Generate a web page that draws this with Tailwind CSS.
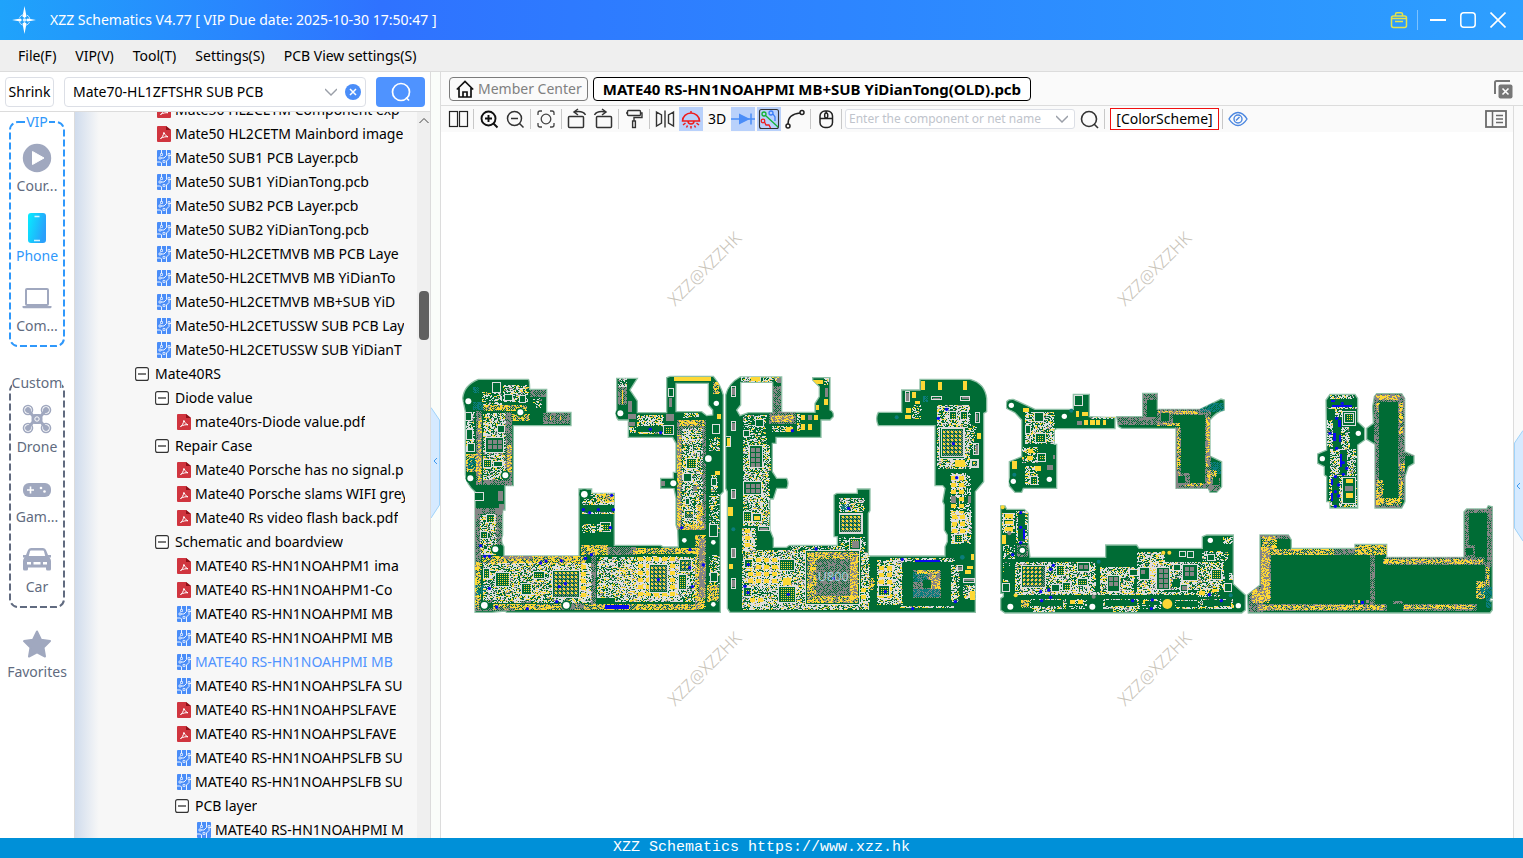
<!DOCTYPE html>
<html lang="en">
<head>
  <meta charset="UTF-8" />
  <meta name="viewport" content="width=device-width, initial-scale=1" />
  <title>XZZ Schematics</title>
  <script src="https://cdn.jsdelivr.net/npm/@tailwindcss/browser@4"></script>
</head>
<body class="h-screen flex flex-col overflow-hidden bg-white text-black text-[14px] leading-5 font-['Noto_Sans','Open_Sans',sans-serif]">

  <!-- Icon sprites -->
  <svg class="hidden">
    <symbol id="i-pdf" viewBox="0 0 14 16">
      <path d="M1 0h8l5 4v11a1 1 0 0 1-1 1H1a1 1 0 0 1-1-1V1a1 1 0 0 1 1-1z" fill="#d0353f" />
      <path d="M9 0l5 4H9z" fill="#8f1119" />
      <path d="M3.500 12.500c1.500-.7 3-3.200 3.300-6 .2-1 .8 3.500 4.200 4.300-2.500-.3-5 .2-7.500 1.700z" fill="none" stroke="#fff" stroke-width="1" />
    </symbol>
    <symbol id="i-pcb" viewBox="0 0 14 16">
      <rect width="14" height="16" rx="1" fill="#4a8df8" />
      <path d="M4.500 0v4M9.500 0v5.500L7 8H4M14 5.500h-2v3L9.500 11v5M0 12h3.500l1 1v3" fill="none" stroke="#fff" stroke-width=".9" />
      <path d="M3.500 3.500h2v2h-2zM2 7h2v2H2zM11 3.500h2v2h-2zM6 10.500h2v2H6z" fill="#4a8df8" stroke="#fff" stroke-width=".7" />
    </symbol>
    <symbol id="i-minus" viewBox="0 0 14 14">
      <rect x=".6" y=".6" width="12.800" height="12.800" rx="2" fill="#fff" stroke="#333" stroke-width="1.100" />
      <path d="M3 7h8" stroke="#222" stroke-width="1.200" />
    </symbol>
  </svg>

  <!-- Title bar -->
  <header class="h-10 shrink-0 flex items-center pl-3 pr-2.5 text-white bg-linear-to-r from-[#1fa3fb] via-[#2f72ff] via-25% to-[#2d9fff]">
    <svg class="w-6 h-7 shrink-0" viewBox="0 0 24 28">
      <path d="M12.500 0l2 10.500-2 1.500-2-1.500zM12.500 28l2-10.500-2-1.500-2 1.500zM0 14l8.500-1.500 1.500 1.500-1.500 1.500zM24 14l-8.500-1.500L14 14l1.500 1.500z" fill="#fff" />
      <circle cx="12.500" cy="14" r="5.500" fill="none" stroke="#c9e6ff" stroke-dasharray="5 3.600" stroke-dashoffset="-2" />
      <circle cx="12.500" cy="14" r="1.800" fill="#d9efff" />
    </svg>
    <h1 class="ml-3.5">XZZ Schematics V4.77 [ VIP Due date: 2025-10-30 17:50:47 ]</h1>
    <div class="ml-auto flex items-center">
      <button aria-label="Toolbox" class="w-5 h-5 flex items-center justify-center">
        <svg class="w-[18px] h-[18px]" viewBox="0 0 18 18" fill="none" stroke="#e6e34a" stroke-width="1.500">
          <rect x="1.500" y="5" width="15" height="11.500" rx="2" />
          <path d="M5.500 5V3.200a1.500 1.500 0 0 1 1.500-1.500h4a1.500 1.500 0 0 1 1.500 1.500V5M1.500 7.500h15M5 10.500h8" />
        </svg>
      </button>
      <span class="w-px h-5 bg-[#7cc2ff] ml-2 mr-[5px]"></span>
      <button aria-label="Minimize" class="w-[30px] h-6 flex items-center justify-center"><svg class="w-4 h-4" viewBox="0 0 16 16"><path d="M0 8h16" stroke="#fff" stroke-width="2" /></svg></button>
      <button aria-label="Maximize" class="w-[30px] h-6 flex items-center justify-center"><svg class="w-4 h-4" viewBox="0 0 16 16"><rect x=".8" y=".8" width="14.400" height="14.400" rx="3" fill="none" stroke="#fff" stroke-width="1.500" /></svg></button>
      <button aria-label="Close" class="w-[30px] h-6 flex items-center justify-center"><svg class="w-4 h-4" viewBox="0 0 16 16"><path d="M.5.500l15 15M15.500.500l-15 15" stroke="#fff" stroke-width="1.600" /></svg></button>
    </div>
  </header>

  <!-- Menu -->
  <nav class="h-8 shrink-0 flex items-center gap-[19px] pl-[18px] bg-[#efefef] border-b border-[#dcdcdc]">
    <button>File(F)</button>
    <button>VIP(V)</button>
    <button>Tool(T)</button>
    <button>Settings(S)</button>
    <button>PCB View settings(S)</button>
  </nav>

  <main class="flex-1 min-h-0 flex">

    <!-- Left side -->
    <aside class="w-[431px] shrink-0 flex flex-col border-r border-[#dcdcdc]">
      <form class="h-10 shrink-0 flex items-center px-[5px] border-b border-[#dcdcdc]">
        <button type="button" class="w-[49px] h-[30px] border border-[#dcdfe6] rounded">Shrink</button>
        <div class="ml-2.5 w-[302px] h-[30px] flex items-center border border-[#dcdfe6] rounded px-2">
          <input aria-label="Search files" value="Mate70-HL1ZFTSHR SUB PCB" class="flex-1 min-w-0 outline-none" />
          <svg class="w-3 h-3" viewBox="0 0 12 12"><path d="M0 3l6 6 6-6" fill="none" stroke="#9a9fa8" stroke-width="1.400" /></svg>
          <button type="button" aria-label="Clear" class="ml-2 -mr-1"><svg class="w-4 h-4" viewBox="0 0 16 16"><circle cx="8" cy="8" r="8" fill="#4a8df8" /><path d="M5 5l6 6M11 5l-6 6" stroke="#fff" stroke-width="1.500" /></svg></button>
        </div>
        <button aria-label="Search" class="ml-auto w-[49px] h-[30px] rounded bg-[#4f93ff] flex items-center justify-center">
          <svg class="w-5 h-5" viewBox="0 0 20 20" fill="none" stroke="#fff" stroke-width="1.700"><circle cx="10" cy="10" r="8.500" /><path d="M15 15.500l3 3" /></svg>
        </button>
      </form>

      <div class="flex-1 min-h-0 flex">
        <!-- Categories -->
        <nav class="w-[74px] shrink-0 px-[9px] text-[#616b80]">
          <fieldset class="h-[235px] relative pt-[3px]">
            <svg class="absolute left-0 top-[-11px] w-14 h-[226px] -z-10" viewBox="0 0 56 226"><rect x="1" y="1" width="54" height="224" rx="8" fill="none" stroke="#2f98fb" stroke-width="2" stroke-dasharray="7 3" /></svg>
            <legend class="mx-auto bg-white px-px text-[#2f98fb]">VIP</legend>
            <button class="w-full h-[70px] pt-2 flex flex-col items-center gap-[3px]">
              <svg class="w-[30px] h-[30px]" viewBox="0 0 30 30"><circle cx="15" cy="15" r="14.200" fill="#a0a8bf" /><path d="M10.500 8.500v13L22 15z" fill="#fff" stroke="#fff" stroke-linejoin="round" /></svg>
              <span>Cour...</span>
            </button>
            <button class="w-full h-[70px] pt-2 flex flex-col items-center gap-[3px] text-[#2f98fb]">
              <svg class="w-[30px] h-[30px]" viewBox="0 0 30 30">
                <defs><linearGradient id="phone" x1="0" y1="0" x2="1" y2=".4"><stop offset="0" stop-color="#06eeff" /><stop offset="1" stop-color="#2aa0fb" /></linearGradient></defs>
                <rect x="6" width="18" height="30" rx="3" fill="url(#phone)" /><path d="M12.500 3.500h5M12 27.500h6" stroke="#d5f6ff" stroke-width="1.300" />
              </svg>
              <span>Phone</span>
            </button>
            <button class="w-full h-[70px] pt-2 flex flex-col items-center gap-[3px]">
              <svg class="w-[30px] h-[30px]" viewBox="0 0 30 30"><rect x="4" y="6" width="22" height="16" rx="1" fill="none" stroke="#a0a8bf" stroke-width="2" /><path d="M.5 23h29v1.500l-1 .8h-27l-1-.8z" fill="#a0a8bf" /></svg>
              <span>Com...</span>
            </button>
          </fieldset>

          <fieldset class="mt-[26px] h-[235px] relative pt-[3px]">
            <svg class="absolute left-0 top-[-11px] w-14 h-[226px] -z-10" viewBox="0 0 56 226"><rect x="1" y="1" width="54" height="224" rx="8" fill="none" stroke="#616b80" stroke-width="2" stroke-dasharray="7 3" /></svg>
            <legend class="mx-auto bg-white">Custom</legend>
            <button class="w-full h-[70px] pt-2 flex flex-col items-center gap-[3px]">
              <svg class="w-[30px] h-[30px]" viewBox="0 0 30 30" fill="none" stroke="#a0a8bf">
                <path d="M6 6l5 6h8l5-6M6 24l5-6h8l5 6" stroke-width="3" /><rect x="10" y="10.500" width="10" height="9" rx="3" fill="#a0a8bf" />
                <circle cx="6" cy="6" r="4.500" stroke-width="1.600" /><circle cx="24" cy="6" r="4.500" stroke-width="1.600" /><circle cx="6" cy="24" r="4.500" stroke-width="1.600" /><circle cx="24" cy="24" r="4.500" stroke-width="1.600" />
                <g fill="#a0a8bf"><circle cx="6" cy="6" r="2.500" /><circle cx="24" cy="6" r="2.500" /><circle cx="6" cy="24" r="2.500" /><circle cx="24" cy="24" r="2.500" /></g>
                <circle cx="15" cy="15" r="2.200" stroke="#fff" />
              </svg>
              <span>Drone</span>
            </button>
            <button class="w-full h-[70px] pt-2 flex flex-col items-center gap-[3px]">
              <svg class="w-[30px] h-[30px]" viewBox="0 0 30 30"><rect x="1" y="9" width="28" height="14" rx="6" fill="#a0a8bf" /><path d="M5 16h7M8.500 12.500v7" stroke="#fff" stroke-width="1.600" /><circle cx="19" cy="14" r="1.300" fill="#fff" /><circle cx="22.500" cy="17.500" r="1.300" fill="#fff" /></svg>
              <span>Gam...</span>
            </button>
            <button class="w-full h-[70px] pt-2 flex flex-col items-center gap-[3px]">
              <svg class="w-[30px] h-[30px]" viewBox="0 0 30 30">
                <path fill-rule="evenodd" fill="#a0a8bf" d="M9 4h12q2.500 0 3.200 2.500L26 11h3v2.500h-1.500Q29 15 29 17v8q0 1.500-1.500 1.500h-2q-1.500 0-1.500-1.500v-1.500H6V25q0 1.500-1.500 1.500h-2Q1 26.500 1 25v-8q0-2 1.500-3.500H1V11h3l1.800-4.500Q6.500 4 9 4zM9 6.500Q8.200 6.500 8 7.300L6.800 12h16.400L22 7.300q-.2-.8-1-.8zM5 18v2.500h4V18zM21 18v2.500h4V18zM11.500 18v2.500h7V18z" />
              </svg>
              <span>Car</span>
            </button>
          </fieldset>

          <button class="mt-[13px] w-full h-[75px] pt-2 flex flex-col items-center gap-[3px]">
            <svg class="w-[30px] h-[30px]" viewBox="0 0 30 30"><path d="M15 2.500l4 8.300 9 1.300-6.500 6.400 1.500 9-8-4.200-8 4.200 1.500-9L2 12.100l9-1.300z" fill="#a0a8bf" stroke="#a0a8bf" stroke-width="2" stroke-linejoin="round" /></svg>
            <span>Favorites</span>
          </button>
        </nav>

        <!-- File tree -->
        <div class="flex-1 min-w-0 flex bg-[#f7f7f7] border-l border-[#dcdcdc]">
          <div class="flex-1 min-w-0 overflow-hidden pr-3 bg-linear-to-r from-[#d0dced] to-transparent to-[24px]">
            <ul id="tree" class="-mt-[14px]"></ul>
          </div>
          <div class="w-[13px] shrink-0 flex flex-col items-center bg-[#efefef] pt-1">
            <svg class="w-2.5 h-2.5" viewBox="0 0 10 10"><path d="M.5 7L5 2.500 9.500 7" fill="none" stroke="#444" /></svg>
            <span class="mt-[165px] w-2.5 h-[49px] rounded bg-[#606060]"></span>
          </div>
        </div>
      </div>
    </aside>

    <!-- Collapse handle -->
    <div class="w-2.5 shrink-0 flex items-center pt-4 bg-[#fafdfa] border-r border-[#dcdcdc]">
      <button aria-label="Collapse file list">
        <svg class="w-[9px] h-[112px]" viewBox="0 0 9 112"><path d="M0 .500L8.500 13v85L0 111" fill="#d6eaff" stroke="#9fd3fa" /><path d="M6 51L3 54l3 3" fill="none" stroke="#3f9bf0" /></svg>
      </button>
    </div>

    <!-- Right side -->
    <section class="flex-1 min-w-0 flex flex-col">
      <div class="h-[34px] shrink-0 flex items-center gap-[5px] pl-2 pr-2.5 bg-[#fafafa] border-b border-[#dcdcdc]">
        <button class="h-6 flex items-center gap-1 pl-1.5 pr-[5px] border border-[#7b7b7b] rounded text-[#808080]">
          <svg class="w-[18px] h-[18px]" viewBox="0 0 18 18" fill="none" stroke="#111" stroke-width="1.700"><path d="M.8 9.500L9 1.500l8.200 8M3 8v9h12V8" /><path d="M7 17v-5h4v5" /></svg>
          Member Center
        </button>
        <button class="h-6 px-[9px] border border-black rounded font-bold text-[15px] bg-white">MATE40 RS-HN1NOAHPMI MB+SUB YiDianTong(OLD).pcb</button>
        <button aria-label="Close all tabs" class="ml-auto">
          <svg class="w-5 h-5" viewBox="0 0 20 20"><path d="M2 15V3.500A1.500 1.500 0 0 1 3.500 2H17" fill="none" stroke="#777" stroke-width="2" /><rect x="5.500" y="5.500" width="14" height="14" rx="2" fill="#777" /><path d="M9.500 9.500l6 6M15.500 9.500l-6 6" stroke="#fff" stroke-width="1.600" /></svg>
        </button>
      </div>

      <div class="flex-1 min-h-0 flex">
        <div class="flex-1 min-w-0 flex flex-col">
          <!-- Toolbar -->
          <div class="h-[26px] shrink-0 flex items-center gap-0.5 px-[5px] bg-[#fafafa]">
            <button aria-label="Split view" class="w-6 h-6"><svg viewBox="0 0 24 24" fill="none" stroke="#222" stroke-width="1.200"><rect x="3.500" y="4.500" width="8" height="15" /><rect x="13.500" y="4.500" width="8" height="15" /></svg></button>
            <span class="w-px h-5 mx-px bg-[#c8c8c8]"></span>
            <button aria-label="Zoom in" class="w-6 h-6"><svg viewBox="0 0 24 24" fill="none" stroke="#111" stroke-width="1.900"><circle cx="11.500" cy="11.500" r="7" /><path d="M16.500 16.500l4 4M8 11.500h7M11.500 8v7" /></svg></button>
            <button aria-label="Zoom out" class="w-6 h-6"><svg viewBox="0 0 24 24" fill="none" stroke="#333" stroke-width="1.500"><circle cx="11.500" cy="11.500" r="7" /><path d="M16.500 16.500l4 4M8 11.500h7" /></svg></button>
            <span class="w-px h-5 mx-px bg-[#c8c8c8]"></span>
            <button aria-label="Fit" class="w-6 h-6"><svg viewBox="0 0 24 24" fill="none" stroke="#444" stroke-width="1.300"><circle cx="12" cy="12" r="4.800" /><path d="M4 8V6q0-2 2-2h2M16 4h2q2 0 2 2v2M20 16v2q0 2-2 2h-2M8 20H6q-2 0-2-2v-2" /></svg></button>
            <span class="w-px h-5 mx-px bg-[#c8c8c8]"></span>
            <button aria-label="Rotate left" class="w-6 h-6"><svg viewBox="0 0 24 24" fill="none" stroke="#333" stroke-width="1.500"><rect x="3.500" y="9.500" width="15" height="11" rx="1" /><path d="M20.500 8Q18 3.500 9.500 5M13 2L9 5l4 3" /></svg></button>
            <button aria-label="Rotate right" class="w-6 h-6"><svg viewBox="0 0 24 24" fill="none" stroke="#333" stroke-width="1.500"><rect x="5.500" y="9.500" width="15" height="11" rx="1" /><path d="M3.500 8Q6 3.500 14.500 5M11 2l4 3-4 3" /></svg></button>
            <span class="w-px h-5 mx-px bg-[#c8c8c8]"></span>
            <button aria-label="Paint" class="w-6 h-6"><svg viewBox="0 0 24 24" fill="none" stroke="#333" stroke-width="1.400"><rect x="5.500" y="3.500" width="13" height="5" rx="1" /><path d="M18.500 6H20v4.500h-8V14M5.500 6H4" /><rect x="10.600" y="14" width="2.800" height="6.500" /></svg></button>
            <span class="w-px h-5 mx-px bg-[#c8c8c8]"></span>
            <button aria-label="Mirror" class="w-6 h-6"><svg viewBox="0 0 24 24" fill="none" stroke="#333" stroke-width="1.400"><path d="M3.500 5l5 3v8l-5 3zM20.500 5l-5 3v8l5 3zM12 3.500v17" /></svg></button>
            <button aria-label="Light" class="w-6 h-6 bg-[#b9d1fb]"><svg viewBox="0 0 24 24" fill="none" stroke="#ee1c1c" stroke-width="1.500"><path d="M3.500 14a8.500 8 0 0 1 17 0zM12 4v2M9 14q0 3 3 3t3-3M6.500 16l-2.500 2M8.500 18.500l-1 2M12 19v2.500M15.500 18.500l1 2M17.500 16l2.500 2" /></svg></button>
            <button class="w-6 h-6">3D</button>
            <button aria-label="Diode" class="w-6 h-6 bg-[#b9d1fb]"><svg viewBox="0 0 24 24" stroke="#4a8df8" stroke-width="1.500"><path d="M0 12h24M20 6.500v11" /><path d="M8 6.500v11l11-5.500z" fill="#4a8df8" stroke="none" /></svg></button>
            <button aria-label="Net lines" class="w-6 h-6 bg-[#b9d1fb]"><svg viewBox="0 0 24 24" fill="none" stroke-width="1.300"><rect x="2.500" y="2.500" width="19" height="19" rx="2" stroke="#333" stroke-width="1.100" /><path d="M8.500 8.500L21 20" stroke="#12b332" /><circle cx="7" cy="7" r="2" stroke="#12b332" /><circle cx="14" cy="6" r="2" stroke="#3a7df6" /><path d="M16 7l2 3v4" stroke="#3a7df6" /><circle cx="6" cy="14" r="1.800" stroke="#ee1c1c" /><path d="M7.500 15l1.500 3h3l1.500 3" stroke="#ee1c1c" /></svg></button>
            <button aria-label="Curve" class="w-6 h-6"><svg viewBox="0 0 24 24" fill="none" stroke="#222" stroke-width="1.500"><circle cx="19" cy="5.500" r="2" /><circle cx="5" cy="19" r="2" /><path d="M5 17Q5 7 17 6" /></svg></button>
            <span class="w-px h-5 mx-px bg-[#c8c8c8]"></span>
            <button aria-label="Mouse" class="w-6 h-6"><svg viewBox="0 0 24 24" fill="none" stroke="#222" stroke-width="1.500"><rect x="6" y="4" width="12.500" height="16.500" rx="5" /><path d="M6 11.500h12.500M12.200 4v2" /><rect x="10.700" y="6" width="3" height="5" rx="1.500" /></svg></button>
            <span class="w-px h-5 mx-px bg-[#c8c8c8]"></span>
            <div class="w-[230px] h-5 flex items-center pl-[3px] pr-1.5 border border-[#dcdfe6] rounded-[3px] bg-white">
              <input aria-label="Component or net name" placeholder="Enter the component or net name" class="w-[203px] outline-none text-[12px] placeholder:text-[#c0c4cc]" />
              <svg class="ml-auto w-3 h-3" viewBox="0 0 12 12"><path d="M0 3l6 6 6-6" fill="none" stroke="#9a9fa8" stroke-width="1.500" /></svg>
            </div>
            <button aria-label="Find" class="w-6 h-6"><svg viewBox="0 0 24 24" fill="none" stroke="#333" stroke-width="1.600"><circle cx="12" cy="12" r="7.500" /><path d="M17 17l4 4" /></svg></button>
            <span class="w-px h-5 mx-px bg-[#c8c8c8]"></span>
            <button class="w-[109px] h-[22px] ml-0.5 border border-[#f01010] bg-white leading-5">[ColorScheme]</button>
            <span class="w-px h-5 mx-px bg-[#c8c8c8]"></span>
            <button aria-label="Show" class="w-6 h-6"><svg viewBox="0 0 24 24" fill="none" stroke="#4a86e0" stroke-width="1.400"><path d="M3 12q4-6.500 9-6.500t9 6.500q-4 6.500-9 6.500T3 12z" /><circle cx="12" cy="12" r="4" /><path d="M10 13.500l3.500-3.500" /></svg></button>
            <button aria-label="Side panel" class="ml-auto w-6 h-6"><svg viewBox="0 0 24 24" fill="none" stroke="#6b6b6b"><rect x="2" y="4" width="20" height="16" stroke-width="1.800" /><path d="M8.500 4v16" stroke-width="1.500" /><path d="M12 8.500h7M12 12h7M12 15.500h7" stroke-width="1.500" /></svg></button>
          </div>

          <!-- Board view -->
          <div class="flex-1 min-h-0">
            <svg id="board" class="w-full h-full" viewBox="441 132 1072 706">
              <g id="boards"></g>
              <g fill="#c8c3b8" font-weight="300" font-size="17" text-anchor="middle">
                <text transform="translate(709 273) rotate(-45)">XZZ@XZZHK</text>
                <text transform="translate(1159 273) rotate(-45)">XZZ@XZZHK</text>
                <text transform="translate(709 673) rotate(-45)">XZZ@XZZHK</text>
                <text transform="translate(1159 673) rotate(-45)">XZZ@XZZHK</text>
              </g>
            </svg>
          </div>
        </div>
        <div class="w-2.5 shrink-0 flex items-center pt-7 bg-[#fafafa] border-l border-[#dcdcdc]">
          <button aria-label="Expand side panel">
            <svg class="w-[9px] h-[112px]" viewBox="0 0 9 112"><path d="M9 .500L.500 13v85L9 111" fill="#d6eaff" stroke="#9fd3fa" /><path d="M6 53L3 56l3 3" fill="none" stroke="#3f9bf0" /></svg>
          </button>
        </div>
      </div>
    </section>
  </main>

  <footer class="h-5 shrink-0 flex items-center justify-center bg-[#0090d8] text-white text-[15px] font-['Liberation_Mono',monospace]">XZZ Schematics https://www.xzz.hk</footer>

  <script>
    // File tree: [level, icon, label, active]
    const rows = [
      [1, 'pdf', 'Mate50 HL2CETM Component exp'],
      [1, 'pdf', 'Mate50 HL2CETM Mainbord image'],
      [1, 'pcb', 'Mate50 SUB1 PCB Layer.pcb'],
      [1, 'pcb', 'Mate50 SUB1 YiDianTong.pcb'],
      [1, 'pcb', 'Mate50 SUB2 PCB Layer.pcb'],
      [1, 'pcb', 'Mate50 SUB2 YiDianTong.pcb'],
      [1, 'pcb', 'Mate50-HL2CETMVB MB PCB Laye'],
      [1, 'pcb', 'Mate50-HL2CETMVB MB YiDianTo'],
      [1, 'pcb', 'Mate50-HL2CETMVB MB+SUB YiD'],
      [1, 'pcb', 'Mate50-HL2CETUSSW SUB PCB Lay'],
      [1, 'pcb', 'Mate50-HL2CETUSSW SUB YiDianT'],
      [0, 'minus', 'Mate40RS'],
      [1, 'minus', 'Diode value'],
      [2, 'pdf', 'mate40rs-Diode value.pdf'],
      [1, 'minus', 'Repair Case'],
      [2, 'pdf', 'Mate40 Porsche has no signal.p'],
      [2, 'pdf', 'Mate40 Porsche slams WIFI grey'],
      [2, 'pdf', 'Mate40 Rs video flash back.pdf'],
      [1, 'minus', 'Schematic and boardview'],
      [2, 'pdf', 'MATE40 RS-HN1NOAHPM1 ima'],
      [2, 'pdf', 'MATE40 RS-HN1NOAHPM1-Co'],
      [2, 'pcb', 'MATE40 RS-HN1NOAHPMI MB'],
      [2, 'pcb', 'MATE40 RS-HN1NOAHPMI MB'],
      [2, 'pcb', 'MATE40 RS-HN1NOAHPMI MB', true],
      [2, 'pcb', 'MATE40 RS-HN1NOAHPSLFA SU'],
      [2, 'pdf', 'MATE40 RS-HN1NOAHPSLFAVE'],
      [2, 'pdf', 'MATE40 RS-HN1NOAHPSLFAVE'],
      [2, 'pcb', 'MATE40 RS-HN1NOAHPSLFB SU'],
      [2, 'pcb', 'MATE40 RS-HN1NOAHPSLFB SU'],
      [2, 'minus', 'PCB layer'],
      [3, 'pcb', 'MATE40 RS-HN1NOAHPMI M']
    ];
    const indent = ['pl-[60px]', 'pl-20', 'pl-[100px]', 'pl-[120px]'];

    document.getElementById('tree').innerHTML = rows.map(([level, icon, label, active]) => `
      <li class="${indent[level]}">
        <button class="w-full h-6 flex items-center text-left ${active ? 'text-[#4f93ff]' : ''}">
          <svg class="w-3.5 shrink-0 ${icon === 'minus' ? 'h-3.5 mr-1.5' : 'h-4 ml-0.5 mr-1'}"><use href="#i-${icon}" /></svg>
          <span class="overflow-hidden whitespace-nowrap">${label}</span>
        </button>
      </li>`).join('');

    // Boards. Each one is drawn at three units to the pixel.
    const W = '#dedede', Y = '#fdd835', G = '#858585', B = '#0a0af0', T = '#0b7d7d', D = '#006c35';
    let seed = 7;
    const rnd = () => (seed = (seed * 16807) % 2147483647) / 2147483647;
    const path = (d, color) => d ? `<path d="${d}" fill="${color}"/>` : '';
    const box = (x, y, w, h) => `M${x} ${y}h${w}v${h}h${-w}z`;

    // Fill a rectangle with small pads; mix = share of each colour
    function scatter(x, y, w, h, mix) {
      const out = mix.map(() => '');
      for (let j = y; j < y + h; j += 3) {
        for (let i = x; i < x + w; i += 3) {
          let r = rnd();
          for (let k = 0; k < mix.length; k++) {
            if (r < mix[k][1]) { out[k] += box(i, j, rnd() < 0.35 ? 6 : 3, 3); break; }
            r -= mix[k][1];
          }
        }
      }
      return out.map((d, k) => path(d, mix[k][0])).join('');
    }

    // Dotted field on a checkerboard
    function dots(x, y, w, h, color, extra) {
      let d = '';
      for (let j = 0; j < h; j += 3)
        for (let i = 0; i < w; i += 3)
          if ((i + j) / 3 % 2 === 0 || rnd() < extra) d += box(x + i, y + j, 3, 3);
      return path(d, color);
    }

    // Regular grid of pads
    function grid(x, y, w, h, pw, ph, gap, color) {
      let d = '';
      for (let j = y; j + ph <= y + h; j += ph + gap)
        for (let i = x; i + pw <= x + w; i += pw + gap) d += box(i, j, pw, ph);
      return path(d, color);
    }

    const draw = {
      m: (x, y, w, h) => scatter(x, y, w, h, [[W, .42], [Y, .11], [G, .06]]),
      s: (x, y, w, h) => scatter(x, y, w, h, [[W, .26], [Y, .08], [G, .04]]),
      v: (x, y, w, h) => dots(x, y, w, h, G, .4),
      y: (x, y, w, h) => dots(x, y, w, h, G, .1) + scatter(x, y, w, h, [[Y, .42]]),
      p: (x, y, w, h) => scatter(x, y, w, h, [[W, .28]]) + grid(x + 3, y + 3, w - 3, h - 3, 15, 12, 9, Y),
      t: (x, y, w, h) => dots(x, y, w, h, T, .4),
      B: (x, y, w, h) => path(box(x, y, w, h), B),
      Y: (x, y, w, h) => path(box(x, y, w, h), Y),
      G: (x, y, w, h) => path(box(x, y, w, h), G),
      D: (x, y, w, h) => path(box(x, y, w, h), D),
      o: (x, y, w, h) => `<rect x="${x}" y="${y}" width="${w}" height="${h}" fill="${D}" stroke="${W}" stroke-width="3"/>`,
      c: (x, y, w, h) => draw.o(x, y, w, h) + grid(x + 6, y + 6, w - 9, h - 9, 12, 12, 3, G),
      g: (x, y, w, h) => draw.o(x, y, w, h) + grid(x + 6, y + 6, w - 9, h - 9, 3, 3, 3, Y),
      q: (x, y, w, h) => draw.o(x, y, w, h) + dots(x + 4, y + 4, w - 8, h - 8, G, 0) + grid(x + 6, y + 6, w - 10, h - 10, 6, 6, 6, Y) + grid(x + 12, y + 12, w - 18, h - 18, 4, 4, 8, D),
      k: (x, y, w, h) => draw.o(x, y, w, h) + path(box(x + 3, y + 3, w - 6, h - 6), G)
    };

    const boards = [
      { at: [450, 365],
        d: 'M38 100Q42 60 85 43H235Q239 44 239 73H290V142H363V182H190V362H165V435H158V510Q150 530 162 545V573H387V372H425V385H493V541H632L640 546H685L683 495 678 480V400L672 370H632V340H670V322H678V235L668 217H535V165H505Q495 155 500 135V40H562L540 75 562 108V143H650V38L660 34H790Q812 60 820 90V380L811 390V742H170L165 738 125 742H75V380Q50 360 46 330V140Z M678 55V140H755L770 152 788 150 788 135 775 120V55Z',
        parts: [
          ['s', 95, 80, 60, 40], ['m', 160, 60, 75, 50], ['o', 127, 52, 26, 32], ['o', 165, 90, 22, 18], ['o', 208, 92, 20, 22], ['v', 240, 75, 48, 20], ['s', 250, 98, 25, 30], ['v', 280, 145, 80, 33], ['Y', 300, 152, 4, 12], ['Y', 330, 152, 4, 12],
          ['t', 68, 66, 18, 16], ['t', 68, 110, 30, 24], ['y', 100, 120, 130, 18], ['v', 78, 138, 18, 220], ['y', 84, 160, 8, 190], ['v', 166, 140, 20, 220], ['y', 170, 240, 12, 80], ['y', 185, 148, 50, 20], ['v', 100, 345, 85, 15],
          ['m', 99, 145, 66, 200], ['c', 108, 218, 52, 44], ['g', 100, 283, 26, 26], ['o', 143, 182, 20, 20], ['o', 132, 290, 25, 16],
          ['m', 48, 140, 22, 120], ['o', 48, 142, 18, 24], ['o', 52, 235, 22, 24], ['o', 50, 195, 18, 30], ['y', 48, 266, 34, 54], ['t', 55, 278, 22, 32],
          ['o', 72, 384, 30, 24], ['G', 144, 378, 14, 30], ['G', 148, 416, 14, 15], ['v', 72, 432, 20, 160], ['v', 72, 428, 85, 16], ['v', 134, 430, 20, 110], ['m', 90, 450, 46, 120], ['g', 110, 450, 24, 24], ['g', 92, 500, 22, 20],
          ['y', 95, 572, 310, 22], ['v', 160, 574, 90, 8], ['y', 392, 540, 80, 28], ['v', 470, 545, 90, 24], ['y', 550, 550, 190, 18],
          ['y', 76, 590, 16, 140], ['t', 78, 660, 30, 30], ['m', 98, 595, 325, 120], ['g', 138, 622, 42, 42], ['g', 215, 655, 30, 34], ['q', 308, 616, 80, 82], ['p', 390, 596, 32, 112], ['g', 100, 612, 20, 30], ['g', 250, 620, 34, 22],
          ['v', 422, 570, 14, 150], ['m', 440, 575, 300, 134], ['s', 500, 598, 58, 92], ['p', 560, 572, 120, 134], ['q', 598, 600, 56, 82], ['q', 690, 584, 36, 36], ['g', 685, 630, 25, 45], ['D', 440, 700, 56, 16],
          ['y', 130, 716, 620, 18], ['v', 76, 728, 120, 8], ['v', 330, 714, 70, 20], ['B', 465, 720, 72, 12], ['y', 736, 510, 28, 220], ['v', 748, 520, 20, 180],
          ['s', 400, 385, 90, 34], ['y', 440, 388, 50, 24], ['D', 396, 420, 96, 24], ['m', 396, 412, 94, 9], ['m', 396, 442, 94, 4], ['s', 396, 478, 40, 26], ['g', 452, 474, 30, 26], ['m', 442, 478, 16, 22],
          ['m', 505, 40, 26, 26], ['v', 505, 66, 26, 54], ['Y', 515, 76, 5, 40], ['G', 535, 146, 24, 16], ['G', 535, 108, 12, 34], ['G', 534, 170, 20, 12], ['m', 536, 185, 20, 18], ['m', 560, 150, 78, 34], ['D', 565, 184, 70, 18], ['m', 562, 200, 76, 6], ['g', 642, 182, 28, 26], ['G', 648, 146, 24, 22],
          ['Y', 672, 36, 112, 12], ['G', 656, 100, 10, 26], ['o', 655, 72, 16, 22], ['y', 788, 50, 16, 34], ['s', 700, 145, 46, 14],
          ['v', 680, 165, 85, 330], ['y', 688, 166, 75, 16], ['y', 682, 210, 10, 280], ['D', 697, 188, 58, 298], ['m', 697, 188, 58, 298], ['g', 710, 280, 30, 32], ['o', 700, 325, 26, 24], ['o', 708, 400, 10, 18], ['q', 704, 436, 28, 26], ['y', 742, 420, 18, 70], ['y', 696, 476, 62, 18], ['G', 728, 364, 14, 14],
          ['o', 788, 180, 20, 26], ['s', 778, 215, 30, 40], ['Y', 802, 148, 12, 14], ['Y', 794, 318, 16, 12], ['m', 784, 330, 18, 50], ['o', 785, 342, 16, 20], ['s', 776, 388, 30, 120], ['o', 780, 480, 24, 34], ['s', 776, 570, 30, 90], ['o', 782, 624, 20, 26], ['y', 770, 660, 34, 50], ['G', 632, 348, 14, 14]
        ],
        dots: [[92, 542], [104, 574], [118, 574], [272, 594], [288, 588], [334, 587], [346, 656], [328, 665], [407, 580], [424, 569], [625, 644], [720, 554], [719, 608], [727, 665], [760, 600], [118, 670], [232, 731], [140, 726], [320, 710], [601, 193], [632, 203], [485, 391], [400, 434], [445, 434], [490, 434], [419, 443], [695, 488], [481, 488]],
        holes: [[55, 109, 9], [211, 142, 9], [61, 340, 9], [166, 331, 9], [136, 553, 9], [103, 721, 10], [349, 721, 10], [403, 388, 10], [511, 145, 9], [799, 115, 8], [775, 281, 10], [670, 355, 9], [703, 526, 7], [790, 532, 7], [790, 718, 7]] },
      { at: [720, 365],
        d: 'M22 380L17 370V90Q25 55 60 36H185V142H285V115L298 95V65L278 45V38H330V135Q342 140 340 155L330 165H303V217H168V235H157V320L170 340H200Q208 355 200 370H170L160 402H150V495L160 520V547H200L208 541H352V515H342V390L350 385H412V372H450V437L445 445V573H675V545L682 530V510L673 495V420L668 410 675 370 668 362H645V182H475Q465 160 475 142H545V75H600V43H750Q795 55 800 100V140L791 145V350L766 380V742H30L22 730Z M62 52V120L50 135 60 152 85 143H158V52Z',
        parts: [
          ['m', 62, 36, 110, 14], ['Y', 92, 37, 28, 10], ['G', 170, 40, 13, 14], ['v', 158, 62, 23, 80], ['v', 148, 142, 80, 36], ['y', 154, 150, 64, 20], ['m', 156, 182, 60, 18], ['Y', 198, 186, 20, 16], ['Y', 243, 150, 12, 16], ['G', 263, 150, 14, 16], ['Y', 282, 150, 12, 14], ['Y', 243, 178, 12, 16], ['Y', 263, 178, 14, 16], ['m', 232, 148, 8, 50], ['Y', 280, 45, 30, 12], ['m', 312, 40, 14, 20], ['G', 314, 68, 10, 28], ['Y', 312, 103, 12, 16], ['Y', 288, 120, 8, 14],
          ['k', 34, 66, 14, 28], ['k', 34, 170, 14, 28], ['o', 18, 216, 14, 30], ['Y', 20, 218, 10, 24], ['k', 34, 374, 14, 28], ['Y', 24, 426, 14, 26], ['k', 34, 550, 14, 28], ['Y', 28, 598, 12, 14], ['k', 34, 642, 14, 28], ['k', 116, 486, 32, 12],
          ['s', 68, 150, 70, 90], ['o', 72, 196, 16, 18], ['o', 108, 164, 24, 20], ['m', 68, 240, 80, 80], ['c', 88, 242, 40, 66], ['m', 68, 320, 76, 160], ['c', 72, 350, 52, 38], ['g', 70, 440, 26, 30], ['o', 98, 446, 28, 24], ['Y', 102, 452, 18, 14],
          ['m', 66, 488, 40, 72], ['p', 72, 488, 30, 66], ['m', 66, 555, 380, 180], ['p', 80, 575, 100, 88], ['g', 178, 584, 46, 34], ['g', 176, 664, 52, 48], ['g', 74, 584, 24, 24], ['g', 72, 668, 24, 28], ['p', 86, 696, 50, 32], ['Y', 188, 640, 24, 20],
          ['o', 258, 558, 160, 160], ['v', 262, 562, 152, 152], ['y', 262, 562, 152, 20], ['y', 262, 692, 152, 20], ['y', 262, 580, 26, 120], ['y', 390, 580, 24, 120], ['D', 420, 560, 4, 150], ['p', 420, 665, 22, 48],
          ['m', 358, 400, 74, 40], ['t', 362, 418, 24, 16], ['o', 358, 446, 70, 60], ['q', 360, 448, 66, 56], ['s', 356, 515, 76, 40], ['g', 388, 520, 34, 34], ['G', 396, 529, 20, 20], ['s', 210, 544, 150, 12],
          ['m', 472, 585, 80, 135], ['p', 474, 600, 60, 100], ['g', 476, 662, 34, 30], ['m', 510, 578, 190, 12], ['D', 546, 590, 150, 140], ['m', 694, 600, 22, 110], ['m', 540, 724, 160, 6], ['m', 543, 590, 3, 134], ['v', 580, 616, 82, 82], ['t', 580, 620, 40, 30], ['t', 580, 672, 80, 24], ['y', 590, 616, 66, 12], ['y', 628, 630, 32, 40], ['D', 608, 644, 26, 26], ['B', 585, 584, 76, 6], ['y', 446, 640, 14, 34],
          ['Y', 604, 48, 12, 26], ['Y', 655, 50, 12, 24], ['Y', 728, 48, 12, 26], ['k', 556, 80, 14, 30], ['Y', 577, 82, 12, 16], ['t', 608, 94, 14, 16], ['k', 636, 95, 28, 10], ['k', 722, 94, 28, 12], ['Y', 584, 108, 16, 10], ['Y', 558, 130, 16, 14], ['Y', 556, 150, 18, 12], ['s', 576, 120, 26, 40], ['k', 766, 144, 12, 28], ['Y', 770, 204, 14, 18], ['k', 762, 236, 14, 34],
          ['m', 650, 120, 98, 190], ['o', 660, 188, 74, 92], ['q', 664, 192, 66, 84], ['Y', 706, 284, 28, 22], ['o', 752, 284, 24, 24], ['q', 754, 286, 20, 20], ['g', 690, 140, 20, 24], ['g', 722, 140, 22, 24], ['s', 746, 180, 20, 80],
          ['m', 692, 325, 44, 50], ['p', 690, 330, 62, 140], ['m', 692, 440, 60, 95], ['p', 694, 446, 60, 60], ['G', 744, 394, 10, 20], ['G', 692, 394, 16, 20], ['g', 704, 508, 24, 24],
          ['Y', 752, 568, 10, 16], ['k', 712, 602, 16, 16], ['Y', 742, 602, 16, 10], ['Y', 734, 616, 20, 10], ['k', 730, 640, 34, 12], ['m', 728, 660, 34, 40], ['Y', 750, 678, 14, 26]
        ],
        dots: [[217, 197], [85, 599], [75, 664], [84, 683], [205, 688], [288, 552], [340, 640], [386, 430], [700, 236], [680, 133], [655, 160], [710, 338], [547, 583], [496, 680], [706, 710], [578, 731]],
        discs: [[530, 157, 6, T], [40, 493, 6, T], [727, 577, 7, T]],
        holes: [] },
      { at: [990, 380],
        d: 'M50 65Q55 57 70 58L135 88H250V43H298V110L350 112H375V146H200L193 150V193H200V325H100L95 337H75L58 318V245L95 230V120L75 98 50 85Z',
        parts: [
          ['m', 104, 96, 86, 96], ['o', 134, 98, 26, 26], ['g', 138, 162, 28, 26], ['o', 108, 138, 14, 22], ['s', 96, 200, 46, 46], ['Y', 113, 206, 16, 12], ['Y', 112, 228, 16, 12], ['g', 144, 222, 24, 22], ['m', 106, 258, 38, 56], ['Y', 134, 258, 20, 16], ['g', 122, 290, 20, 24], ['G', 172, 255, 18, 14], ['G', 188, 224, 8, 14], ['Y', 66, 242, 14, 26], ['Y', 98, 84, 18, 12],
          ['Y', 258, 94, 10, 16], ['Y', 276, 96, 18, 12], ['Y', 282, 120, 12, 14], ['Y', 300, 120, 14, 14], ['Y', 318, 120, 12, 14], ['Y', 338, 120, 10, 14], ['G', 262, 122, 14, 14], ['o', 255, 46, 24, 32], ['m', 300, 112, 72, 6]
        ],
        dots: [], discs: [[244, 92, 6, T], [73, 284, 6, T]], holes: [[64, 76, 8], [223, 109, 8], [70, 304, 8], [178, 298, 8]] },
      { at: [990, 380],
        d: 'M380 110L385 140 395 145H558V325H655L660 337H680L695 320V245L660 228V120Q680 95 703 90V60L693 57 630 88H502V40H458V110Z',
        parts: [
          ['v', 380, 112, 120, 24], ['v', 458, 42, 44, 18], ['v', 500, 86, 160, 16], ['v', 458, 60, 12, 60], ['y', 505, 92, 120, 9], ['v', 500, 98, 46, 34], ['D', 512, 100, 26, 22], ['y', 502, 128, 66, 8], ['v', 556, 140, 16, 185], ['y', 562, 140, 9, 150], ['v', 644, 98, 16, 230], ['y', 648, 110, 7, 150], ['v', 556, 308, 110, 16], ['y', 585, 310, 50, 8], ['v', 558, 280, 40, 36], ['D', 564, 288, 22, 22], ['t', 630, 68, 72, 26], ['t', 664, 246, 28, 34], ['y', 652, 270, 30, 40], ['v', 660, 290, 30, 40], ['D', 668, 292, 20, 24]
        ],
        dots: [], holes: [] },
      { at: [990, 380],
        d: 'M32 378H45L50 388H103L115 400V490L120 532H347V495H440L447 505H637V470L650 465H730V612L766 645V690L755 699H45L32 690V655L40 650V640H32Z',
        parts: [
          ['m', 36, 400, 36, 60], ['o', 42, 400, 28, 14], ['Y', 44, 402, 24, 11], ['o', 42, 420, 28, 14], ['Y', 44, 422, 24, 11], ['Y', 44, 440, 24, 12], ['Y', 36, 466, 12, 26], ['m', 78, 394, 36, 96], ['D', 84, 398, 20, 86], ['s', 40, 496, 34, 40], ['v', 82, 494, 32, 36], ['B', 100, 448, 6, 30],
          ['m', 40, 545, 18, 60], ['D', 42, 550, 14, 50], ['o', 38, 612, 22, 24], ['m', 76, 545, 240, 95], ['q', 94, 556, 74, 66], ['g', 200, 556, 24, 30], ['c', 262, 548, 38, 28], ['g', 262, 596, 32, 22], ['g', 218, 608, 24, 24], ['o', 186, 614, 22, 20],
          ['m', 330, 560, 100, 78], ['c', 352, 586, 36, 50], ['o', 418, 568, 24, 20], ['m', 440, 515, 80, 126], ['c', 448, 564, 32, 34], ['m', 480, 545, 220, 84], ['c', 500, 562, 40, 66], ['c', 578, 554, 46, 48], ['D', 548, 596, 22, 24], ['g', 664, 568, 32, 32], ['o', 552, 555, 20, 18], ['o', 568, 515, 20, 16], ['o', 594, 514, 16, 18], ['s', 636, 512, 76, 30], ['k', 572, 614, 22, 20], ['o', 704, 612, 22, 24], ['m', 698, 470, 26, 20], ['o', 652, 524, 22, 18], ['m', 716, 580, 12, 20],
          ['m', 76, 636, 250, 9], ['m', 330, 636, 280, 8], ['m', 120, 656, 106, 28], ['D', 124, 660, 96, 18], ['p', 236, 656, 54, 30], ['m', 340, 656, 108, 28], ['D', 344, 660, 98, 18], ['p', 456, 656, 56, 30], ['D', 464, 664, 40, 10], ['m', 554, 660, 76, 26], ['D', 558, 664, 66, 16], ['m', 634, 656, 96, 28], ['D', 640, 660, 84, 18], ['m', 130, 684, 66, 10], ['m', 370, 684, 70, 10], ['s', 616, 620, 70, 30], ['Y', 628, 634, 16, 10], ['Y', 666, 626, 16, 10], ['y', 92, 660, 22, 22]
        ],
        dots: [[92, 398], [92, 442], [92, 488], [68, 524], [152, 635], [176, 630], [182, 568], [190, 556], [182, 652], [155, 662], [428, 662], [487, 660], [484, 686], [694, 662], [658, 644]],
        holes: [[97, 511, 8], [661, 481, 8], [61, 680, 9], [307, 680, 9], [745, 677, 8]],
        discs: [[532, 672, 15, Y], [38, 382, 6, Y], [520, 518, 6, Y], [538, 518, 6, Y], [77, 646, 6, Y], [326, 545, 6, T], [722, 646, 6, T], [311, 650, 6, G], [58, 460, 6, G]] },
      { at: [1240, 380],
        d: 'M258 60L270 43H345L353 55V125L374 145V180L353 195V384H270V365H260V290L253 285V260L233 250V222L260 210Z',
        parts: [
          ['m', 270, 46, 72, 12], ['D', 262, 60, 88, 20], ['m', 262, 80, 90, 4], ['m', 285, 86, 24, 24], ['o', 308, 94, 38, 44], ['g', 314, 100, 26, 28], ['m', 262, 120, 20, 80], ['D', 278, 116, 20, 88], ['m', 302, 140, 24, 64], ['m', 270, 208, 78, 80], ['D', 300, 210, 20, 76], ['m', 266, 288, 14, 90], ['D', 276, 292, 22, 84], ['m', 298, 290, 50, 90], ['o', 308, 292, 38, 78], ['Y', 318, 296, 20, 14], ['G', 316, 318, 22, 16], ['Y', 318, 340, 20, 14],
          ['B', 275, 74, 60, 6], ['B', 274, 60, 12, 6], ['B', 278, 160, 9, 24], ['B', 296, 165, 6, 20], ['B', 300, 222, 5, 40], ['B', 272, 296, 6, 20], ['B', 294, 120, 8, 20], ['B', 272, 340, 6, 24]
        ],
        dots: [[307, 70], [290, 115], [290, 205], [270, 160], [320, 265], [310, 248], [310, 283], [286, 290], [296, 315], [286, 335], [296, 348], [286, 379]],
        holes: [[355, 160, 8], [247, 236, 8]] },
      { at: [1240, 380],
        d: 'M403 50L410 41H485L494 55V215L522 227V250L505 260 495 290V365L485 384H405V193L380 178V145L400 130 398 80Z',
        parts: [
          ['v', 402, 42, 92, 22], ['y', 408, 44, 68, 14], ['v', 402, 60, 14, 320], ['y', 408, 70, 8, 26], ['v', 475, 60, 19, 300], ['y', 478, 68, 7, 60], ['y', 478, 140, 7, 20], ['y', 478, 250, 14, 24], ['y', 478, 285, 7, 70], ['y', 408, 300, 20, 74], ['y', 408, 354, 74, 20], ['v', 402, 374, 88, 9], ['v', 494, 218, 27, 9]
        ],
        dots: [], holes: [] },
      { at: [1240, 380],
        d: 'M22 645L60 615V465H145L154 480V505H345V493H440V532H672V395L680 387H740L745 377 757 380V555V655H750V663H757V690L750 699H25Z',
        parts: [
          ['v', 60, 465, 94, 12], ['y', 66, 468, 40, 40], ['v', 60, 500, 32, 160], ['y', 64, 500, 26, 160], ['y', 90, 506, 190, 16], ['v', 280, 506, 66, 18], ['y', 346, 495, 94, 30], ['v', 436, 532, 300, 22], ['y', 430, 536, 300, 14], ['v', 390, 525, 14, 150], ['v', 740, 380, 17, 180], ['v', 674, 388, 80, 12], ['v', 674, 395, 12, 110], ['v', 672, 495, 32, 36], ['D', 678, 505, 20, 20], ['v', 736, 545, 14, 80], ['y', 738, 560, 9, 54], ['y', 708, 604, 26, 54], ['t', 722, 622, 32, 26], ['t', 738, 648, 14, 36],
          ['v', 26, 620, 40, 75], ['y', 36, 628, 50, 40], ['v', 50, 672, 660, 20], ['y', 54, 674, 380, 14], ['D', 440, 660, 50, 34], ['v', 460, 664, 30, 9], ['y', 492, 676, 210, 12], ['G', 338, 660, 7, 9], ['Y', 354, 660, 7, 9], ['B', 363, 664, 9, 7], ['G', 378, 660, 9, 9]
        ],
        dots: [], holes: [] }
    ];

    document.getElementById('boards').innerHTML = boards.map((b, n) => `
      <g transform="translate(${b.at[0]} ${b.at[1]}) scale(.33333)">
        <clipPath id="edge${n}"><path clip-rule="evenodd" d="${b.d}"/></clipPath>
        <path d="${b.d}" fill="${D}" fill-rule="evenodd" stroke="#8fc0a6" stroke-width="4"/>
        <g clip-path="url(#edge${n})" shape-rendering="crispEdges">${b.parts.map(([k, x, y, w, h]) => draw[k](x, y, w, h)).join('')}</g>
        ${b.dots.map(([x, y]) => `<circle cx="${x}" cy="${y}" r="5" fill="${B}"/>`).join('')}
        ${(b.discs || []).map(([x, y, r, c]) => `<circle cx="${x}" cy="${y}" r="${r}" fill="${c}"/>`).join('')}
        ${b.holes.map(([x, y, r]) => `<circle cx="${x}" cy="${y}" r="${r + 5}" fill="${D}"/><circle cx="${x}" cy="${y}" r="${r}" fill="#fff"/>`).join('')}
        ${n === 1 ? '<text x="340" y="647" text-anchor="middle" font-size="38" fill="#a9d3da">U800</text>' : ''}
      </g>`).join('');
  </script>
</body>
</html>
